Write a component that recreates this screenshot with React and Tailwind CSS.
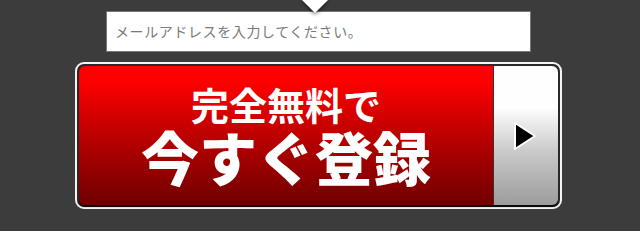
export default function App() {
  return (
    <div className="relative w-[640px] h-[231px] bg-[#3c3c3c] overflow-hidden font-['Noto_Sans_CJK_JP','Noto_Sans',sans-serif]">
      {/* pointer above the input */}
      <div className="absolute left-[302px] top-0 w-0 h-0 border-x-[13px] border-x-transparent border-t-[13px] border-t-white drop-shadow-[0_1px_2px_rgba(0,0,0,0.7)]" />

      <div className="pt-[11px] pl-[106px]">
        <div className="w-[425px] h-[41px] bg-white border border-[#777] flex items-center pl-[8px]">
          <span className="text-[14px] text-[#7a7a7a] tracking-[0.6px]">
            メールアドレスを入力してください。
          </span>
        </div>
      </div>

      <div className="mt-[10px] ml-[75px] w-[487px] h-[147px] rounded-[9px] border-[2px] border-[#f4f4f4] bg-[#2a2a2a] p-[2px]">
        <div className="flex h-full rounded-[6px] overflow-hidden shadow-[0_2px_1px_rgba(0,0,0,0.8)]">
          <div className="flex-1 flex flex-col items-center justify-center gap-[1px] bg-gradient-to-b from-[#ff0000] from-[10%] to-[#700000] text-white">
            <span className="text-[38px] leading-[40px] font-bold">完全無料で</span>
            <span className="text-[58px] leading-[62px] font-black">今すぐ登録</span>
          </div>
          <div className="w-[65px] flex items-center justify-center border-l border-[#333] bg-gradient-to-b from-[#fefefe] from-[30%] via-[#c9c9c9] via-[62%] to-[#9c9c9c]">
            <svg width="28" height="32" viewBox="0 0 28 32" className="-ml-[3px]">
              <polygon points="4,3 24,16 4,29" fill="#000" stroke="#fff" strokeWidth="2" strokeLinejoin="round" />
            </svg>
          </div>
        </div>
      </div>
    </div>
  );
}
